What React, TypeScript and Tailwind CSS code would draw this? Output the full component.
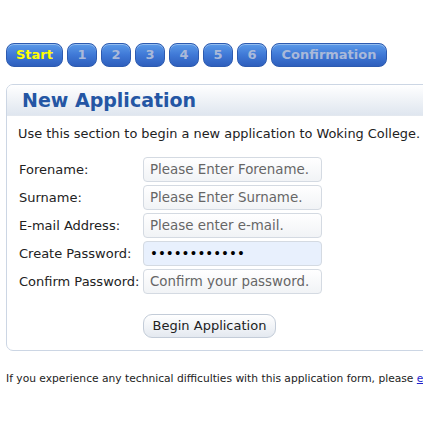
import React from "react";

const steps = ["Start", "1", "2", "3", "4", "5", "6", "Confirmation"];

const fields = [
  { label: "Forename:", placeholder: "Please Enter Forename.", type: "text" },
  { label: "Surname:", placeholder: "Please Enter Surname.", type: "text" },
  { label: "E-mail Address:", placeholder: "Please enter e-mail.", type: "text" },
  { label: "Create Password:", placeholder: "", type: "password", value: "abcdefghijkl" },
  { label: "Confirm Password:", placeholder: "Confirm your password.", type: "password" },
];

function StepButton({ label, active }: { label: string; active: boolean }) {
  const wide = label.length > 1;
  return (
    <div
      className={`h-[24px] ${wide ? (active ? "w-[57px]" : "w-[116px]") : "w-[30px]"} flex items-center justify-center rounded-[8px] border border-[#2d5bb0] bg-gradient-to-b from-[#5b9ae8] via-[#3f78d6] to-[#2e5fbd] shadow-[inset_0_1px_0_rgba(255,255,255,0.35)] text-[13px] font-bold ${active ? "text-[#ffff00]" : "text-[#a9b9d9]"}`}
    >
      {label}
    </div>
  );
}

export default function App() {
  return (
    <div className="w-[423px] h-[423px] overflow-hidden bg-white font-['DejaVu_Sans','Verdana',sans-serif] text-[#222]">
      {/* step tabs */}
      <div className="flex gap-[4px] pt-[43px] pl-[6px]">
        {steps.map((s, i) => (
          <StepButton key={s} label={s} active={i === 0} />
        ))}
      </div>

      {/* panel */}
      <div className="mt-[17px] ml-[6px] w-[460px] rounded-[7px] border border-[#ccd6e4] overflow-hidden">
        <div className="h-[31px] flex items-center pl-[15px] bg-gradient-to-b from-white to-[#dfe6ef] border-b border-[#e3e8ef]">
          <h1 className="text-[19px] font-bold text-[#2456a4] leading-none">New Application</h1>
        </div>

        <div className="pl-[11px] pt-[9px] pb-[12px]">
          <p className="text-[12.9px] leading-[18px] whitespace-nowrap">
            Use this section to begin a new application to Woking College.
          </p>

          <div className="mt-[14px] flex flex-col gap-[3px]">
            {fields.map((f) => (
              <div key={f.label} className="flex items-center">
                <label className="w-[125px] pl-[1px] text-[13px] whitespace-nowrap">{f.label}</label>
                <input
                  type={f.type}
                  placeholder={f.placeholder}
                  defaultValue={f.value}
                  readOnly
                  className={`h-[25px] w-[179px] rounded-[4px] border border-[#d4dae2] px-[6px] text-[13.4px] text-black placeholder:text-[#666] outline-none ${
                    f.value ? "bg-[#e8f0fd]" : "bg-gradient-to-b from-white to-[#f1f3f6]"
                  }`}
                />
              </div>
            ))}
          </div>

          <div className="mt-[19px] pl-[125px]">
            <button className="h-[24px] w-[133px] rounded-[9px] border border-[#c3ccd8] bg-gradient-to-b from-white to-[#e4e9f0] text-[13px] text-[#222]">
              Begin Application
            </button>
          </div>
        </div>
      </div>

      <p className="mt-[20px] pl-[6px] text-[10.7px] whitespace-nowrap">
        If you experience any technical difficulties with this application form, please{" "}
        <a className="text-[#2222cc] underline">email us</a>
      </p>
    </div>
  );
}
